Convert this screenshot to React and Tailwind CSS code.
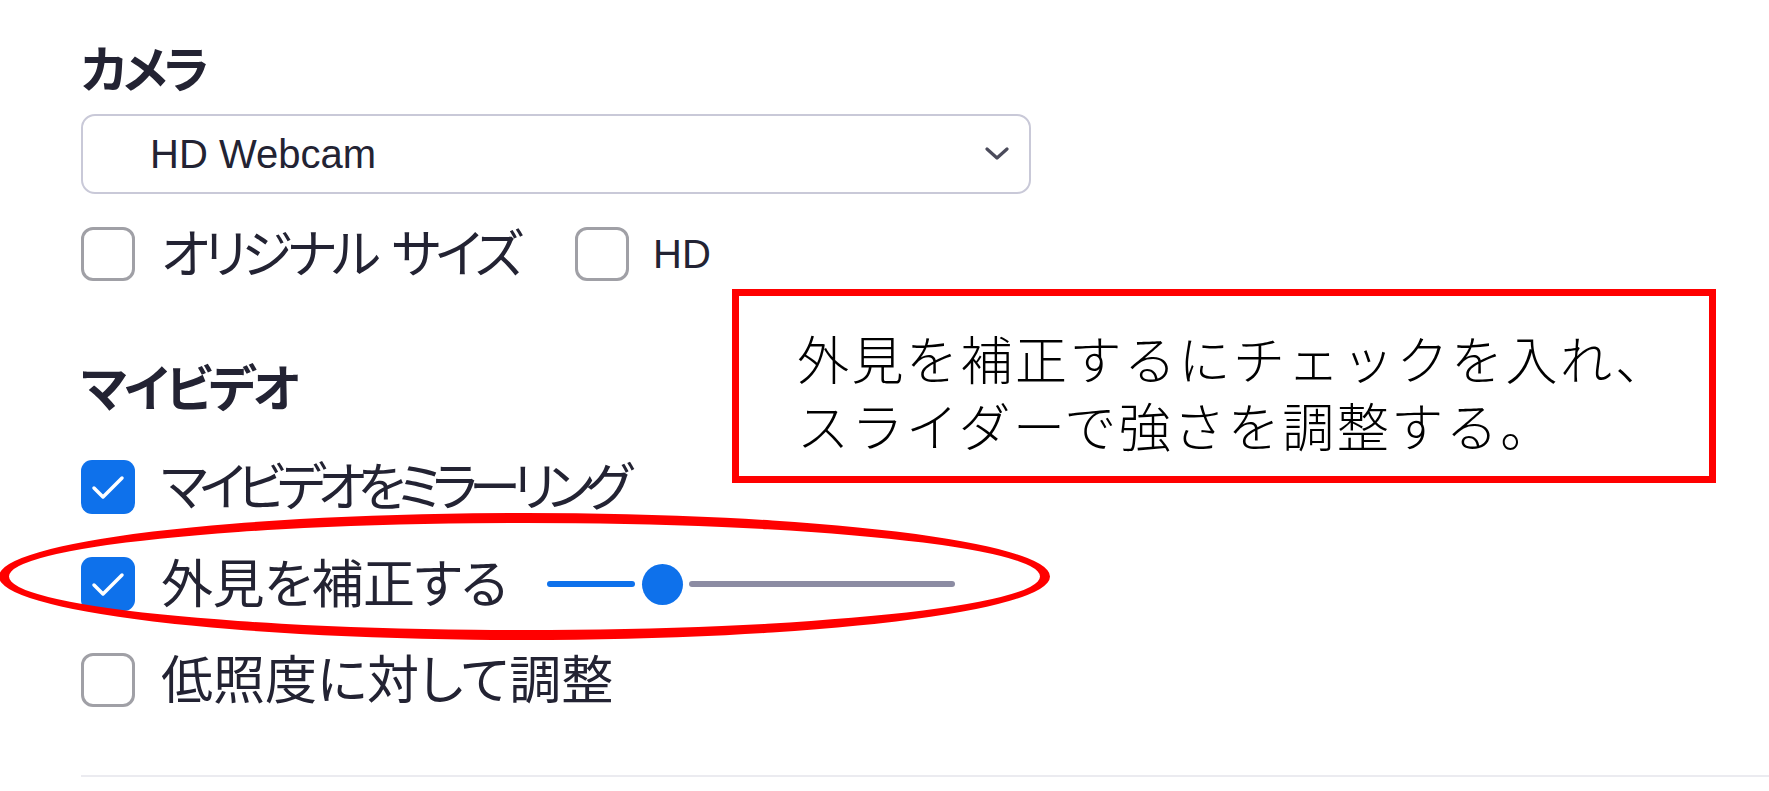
import React from 'react'

const jp = "font-['Noto_Sans_CJK_JP',sans-serif] [font-feature-settings:'palt']"

const Check = ({ checked }) =>
  checked ? (
    <div className="w-[54px] h-[54px] rounded-[11px] bg-[#0e71eb] flex items-center justify-center shrink-0">
      <svg width="54" height="54" viewBox="0 0 54 54" fill="none">
        <path d="M13 28 L22 37 L41 18" stroke="white" strokeWidth="3.5" strokeLinecap="round" strokeLinejoin="round" />
      </svg>
    </div>
  ) : (
    <div className="w-[54px] h-[54px] rounded-[12px] border-[3px] border-[#a0a0a6] bg-white shrink-0"></div>
  )

const Row = ({ checked, label, track, children }) => (
  <div className="flex items-center h-[54px]">
    <Check checked={checked} />
    <span className={`${jp} ml-[26px] text-[52px] leading-[52px] text-[#232333] mb-[6px] whitespace-nowrap ${track}`}>{label}</span>
    {children}
  </div>
)

export default function App() {
  return (
    <div className="relative w-[1769px] h-[791px] overflow-hidden bg-white">
      <div className="flex flex-col pl-[81px] pt-[41px]">
        {/* カメラ */}
        <h2 className={`${jp} text-[50px] leading-[50px] font-bold text-[#232333] tracking-[-4px]`}>カメラ</h2>

        <div className="mt-[23px] w-[950px] h-[80px] border-2 border-[#c9c9d8] rounded-[14px] flex items-center justify-between pl-[67px] pr-[20px]">
          <span className="font-['Liberation_Sans',sans-serif] text-[40px] leading-[40px] text-[#232333]">HD Webcam</span>
          <svg width="24" height="14" viewBox="0 0 24 14" fill="none">
            <path d="M2 2 L12 11 L22 2" stroke="#4b4b5b" strokeWidth="3.2" strokeLinecap="round" strokeLinejoin="round" />
          </svg>
        </div>

        <div className="mt-[33px] flex items-center h-[54px]">
          <Check checked={false} />
          <div className={`${jp} ml-[26px] w-[345px] shrink-0 flex text-[52px] leading-[52px] text-[#232333] mb-[6px] whitespace-nowrap tracking-[-5px]`}>
            <span>オリジナル</span>
            <span className="ml-[16px]">サイズ</span>
          </div>
          <div className="ml-[69px]">
            <Check checked={false} />
          </div>
          <span className="ml-[24px] font-['Liberation_Sans',sans-serif] text-[40px] leading-[40px] text-[#232333]">HD</span>
        </div>

        {/* マイビデオ */}
        <h2 className={`${jp} mt-[79px] text-[50px] leading-[50px] font-bold text-[#232333] tracking-[-3px]`}>マイビデオ</h2>

        <div className="mt-[50px]">
          <Row checked label="マイビデオをミラーリング" track="tracking-[-8px]" />
        </div>
        <div className="mt-[43px]">
          <Row checked label="外見を補正する" track="tracking-[-0.5px]">
            <div className="ml-[40px] flex items-center">
              <div className="w-[88px] h-[6px] rounded-full bg-[#0e71eb]"></div>
              <div className="ml-[7px] w-[41px] h-[41px] rounded-full bg-[#0e71eb]"></div>
              <div className="ml-[6px] w-[266px] h-[6px] rounded-full bg-[#8c8ca3]"></div>
            </div>
          </Row>
        </div>
        <div className="mt-[42px]">
          <Row checked={false} label="低照度に対して調整" track="tracking-[0px]" />
        </div>

        <div className="mt-[68px] h-[2px] bg-[#ebebf0]"></div>
      </div>

      {/* annotation: red ellipse */}
      <div className="absolute left-[-1px] top-[513px] w-[1051px] h-[127px] rounded-[50%] border-[10px] border-[#ff0000]"></div>

      {/* annotation: callout box */}
      <div className="absolute left-[732px] top-[289px] w-[984px] h-[194px] border-[7px] border-[#ff0000] bg-white pl-[58px] pt-[28px]">
        <div className="font-['Noto_Sans_CJK_JP',sans-serif] font-light text-[52px] leading-[67px] tracking-[2.5px] text-black whitespace-nowrap">
          <div>外見を補正するにチェックを入れ、</div>
          <div>スライダーで強さを調整する。</div>
        </div>
      </div>
    </div>
  )
}
